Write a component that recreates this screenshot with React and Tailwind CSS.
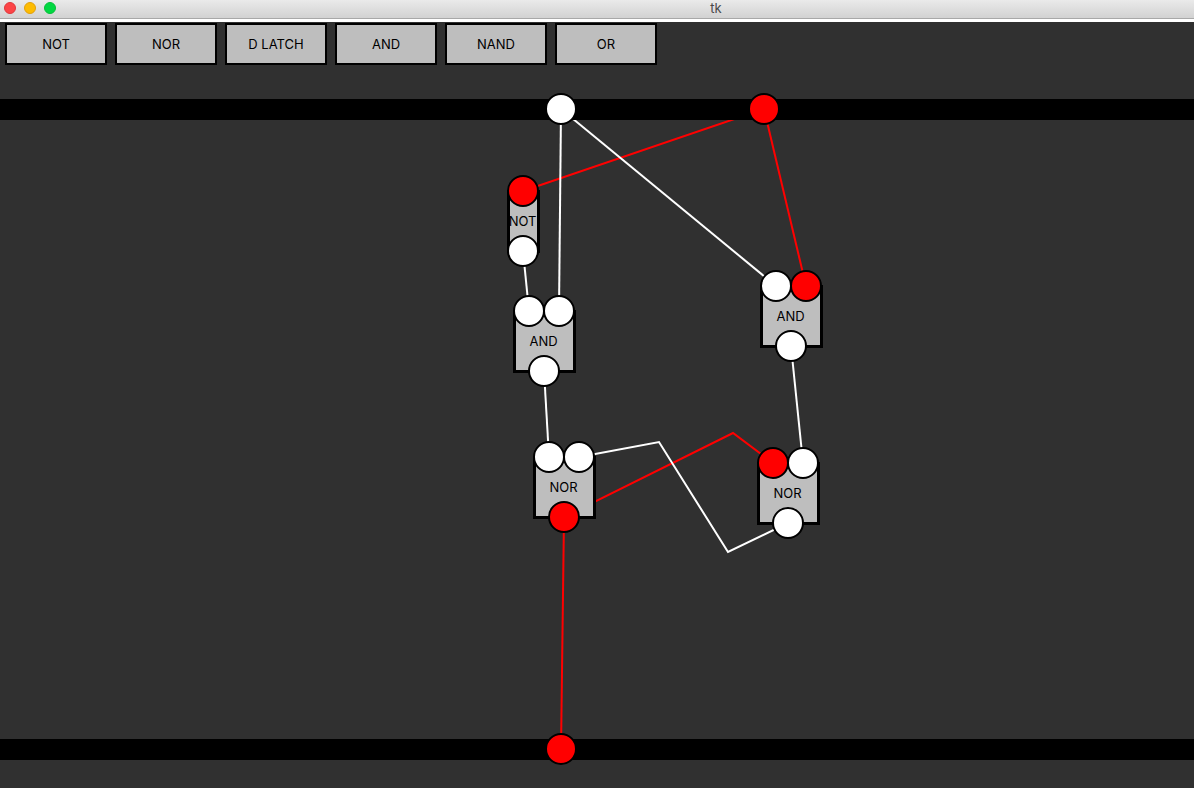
import React from "react";

const TOOLS = ["NOT", "NOR", "D LATCH", "AND", "NAND", "OR"];

// Board coordinates start at the top edge of the input rail.
const WIRES = [
  { points: "523,92 764,10", on: true },
  { points: "764,10 806,187", on: true },
  { points: "561,10 559,212", on: false },
  { points: "561,10 776,187", on: false },
  { points: "523,152 529,212", on: false },
  { points: "544,272 549,358", on: false },
  { points: "791,247 803,364", on: false },
  { points: "564,418 733,334 773,364", on: true },
  { points: "579,358 659,343 728,453 788,424", on: false },
  { points: "564,418 561,650", on: true },
];

const GATES = [
  { id: "not", label: "NOT", x: 507, y: 91, inputs: [true], output: false },
  { id: "and-left", label: "AND", x: 513, y: 211, inputs: [false, false], output: false },
  { id: "and-right", label: "AND", x: 760, y: 186, inputs: [false, true], output: false },
  { id: "nor-left", label: "NOR", x: 533, y: 357, inputs: [false, false], output: true },
  { id: "nor-right", label: "NOR", x: 757, y: 363, inputs: [true, false], output: false },
];

const TERMINALS = [
  { id: "in-a", label: "Input A", x: 561, y: 10, on: false },
  { id: "in-b", label: "Input B", x: 764, y: 10, on: true },
  { id: "out", label: "Output", x: 561, y: 650, on: true },
];

function Port({ x, y, on, label }) {
  return (
    <button
      type="button"
      aria-label={label}
      aria-pressed={on}
      className={`absolute size-8 rounded-full border-2 border-black ${on ? "bg-[#ff0000]" : "bg-white"}`}
      style={{ left: x - 16, top: y - 16 }}
    />
  );
}

function Gate({ gate }) {
  const narrow = gate.inputs.length === 1;
  return (
    <>
      <div
        className={`absolute flex h-[63px] items-center justify-center border-3 border-black bg-[#bebebe] pr-0.5 pb-0.5 text-[13px] leading-4 ${
          narrow ? "w-[33px]" : "w-[63px]"
        }`}
        style={{ left: gate.x, top: gate.y }}
      >
        {gate.label}
      </div>
      {gate.inputs.map((on, i) => (
        <Port key={i} x={gate.x + 16 + i * 30} y={gate.y + 1} on={on} label={`${gate.label} input ${i + 1}`} />
      ))}
      <Port x={gate.x + (narrow ? 16 : 31)} y={gate.y + 61} on={gate.output} label={`${gate.label} output`} />
    </>
  );
}

export default function App() {
  return (
    <div className="flex min-h-screen flex-col overflow-x-hidden bg-[#303030] font-['Inter',sans-serif] text-black">
      <header className="flex h-[19px] items-center border-b border-[#a8a8a8] bg-linear-to-b from-[#eaeaea] to-[#d2d2d2] pb-0.5 pl-1">
        <div className="flex gap-2">
          <button type="button" aria-label="Close" className="size-3 rounded-full border border-[#e0383c] bg-[#fc4547]" />
          <button type="button" aria-label="Minimize" className="size-3 rounded-full border border-[#e2a00c] bg-[#fdbc02]" />
          <button type="button" aria-label="Zoom" className="size-3 rounded-full border border-[#05c038] bg-[#02d842]" />
        </div>
        <h1 className="flex-1 pl-[182px] text-center text-[13px] leading-4 text-[#484848]">tk</h1>
      </header>
      <div className="h-[3px] bg-white" />

      <nav aria-label="Gates" className="flex gap-2 px-[5px] pt-px pb-[34px]">
        {TOOLS.map((tool) => (
          <button
            key={tool}
            type="button"
            className="h-[42px] w-[102px] border-2 border-black bg-[#bebebe] text-[13px] leading-4"
          >
            {tool}
          </button>
        ))}
      </nav>

      <main className="relative">
        <svg className="absolute inset-0 size-full" fill="none" strokeWidth="2" aria-hidden="true">
          {WIRES.map((wire) => (
            <polyline key={wire.points} points={wire.points} stroke={wire.on ? "#ff0000" : "#ffffff"} />
          ))}
        </svg>
        <div className="relative h-[21px] bg-black" />
        <div className="h-[619px]" />
        <div className="relative h-[21px] bg-black" />
        {GATES.map((gate) => (
          <Gate key={gate.id} gate={gate} />
        ))}
        {TERMINALS.map((t) => (
          <Port key={t.id} x={t.x} y={t.y} on={t.on} label={t.label} />
        ))}
      </main>
    </div>
  );
}
